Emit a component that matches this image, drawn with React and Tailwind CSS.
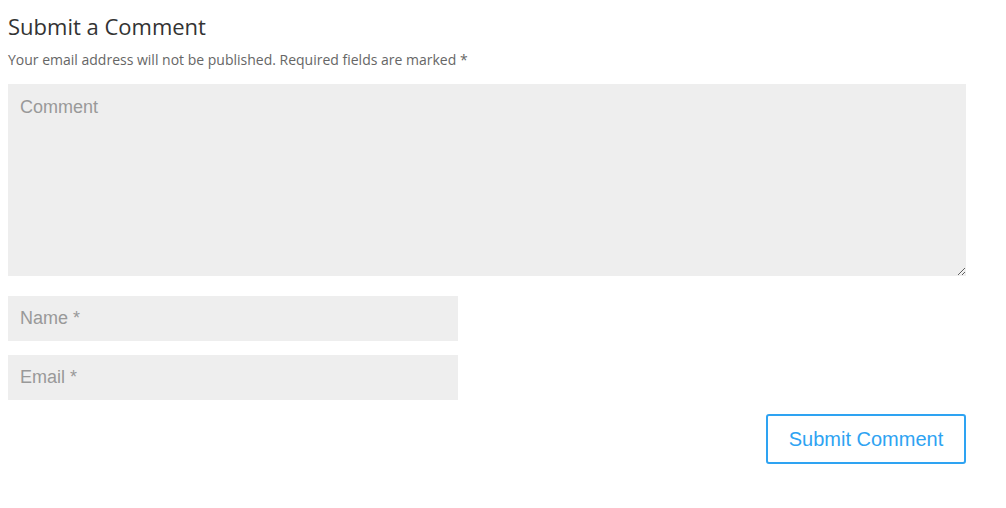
export default function App() {
  return (
    <div className="w-[1006px] h-[508px] bg-white pl-2 pr-[40px] pt-[12px]">
      <h3 className="text-[22px] leading-[28px] text-[#333] font-['Open_Sans',sans-serif]">Submit a Comment</h3>
      <p className="mt-[9px] text-[14px] leading-[22px] text-[#666] font-['Open_Sans',sans-serif]">
        Your email address will not be published. Required fields are marked *
      </p>
      <form className="mt-[13px] flex flex-col" onSubmit={(e) => e.preventDefault()}>
        <textarea
          placeholder="Comment"
          className="block w-[958px] h-[192px] bg-[#eee] px-3 py-[11px] text-[18px] leading-[24px] text-[#999] placeholder:text-[#999] font-['Liberation_Sans',Arial,sans-serif] outline-none"
        />
        <input
          placeholder="Name *"
          className="block mt-[20px] w-[450px] h-[45px] bg-[#eee] px-3 text-[18px] text-[#999] placeholder:text-[#999] font-['Liberation_Sans',Arial,sans-serif] outline-none"
        />
        <input
          placeholder="Email *"
          className="block mt-[14px] w-[450px] h-[45px] bg-[#eee] px-3 text-[18px] text-[#999] placeholder:text-[#999] font-['Liberation_Sans',Arial,sans-serif] outline-none"
        />
        <div className="w-[958px] flex justify-end mt-[14px]">
          <button
            type="submit"
            className="w-[200px] h-[50px] border-2 border-[#2ea3f2] rounded-[3px] text-[#2ea3f2] text-[20px] font-['Liberation_Sans',Arial,sans-serif]"
          >
            Submit Comment
          </button>
        </div>
      </form>
    </div>
  );
}
